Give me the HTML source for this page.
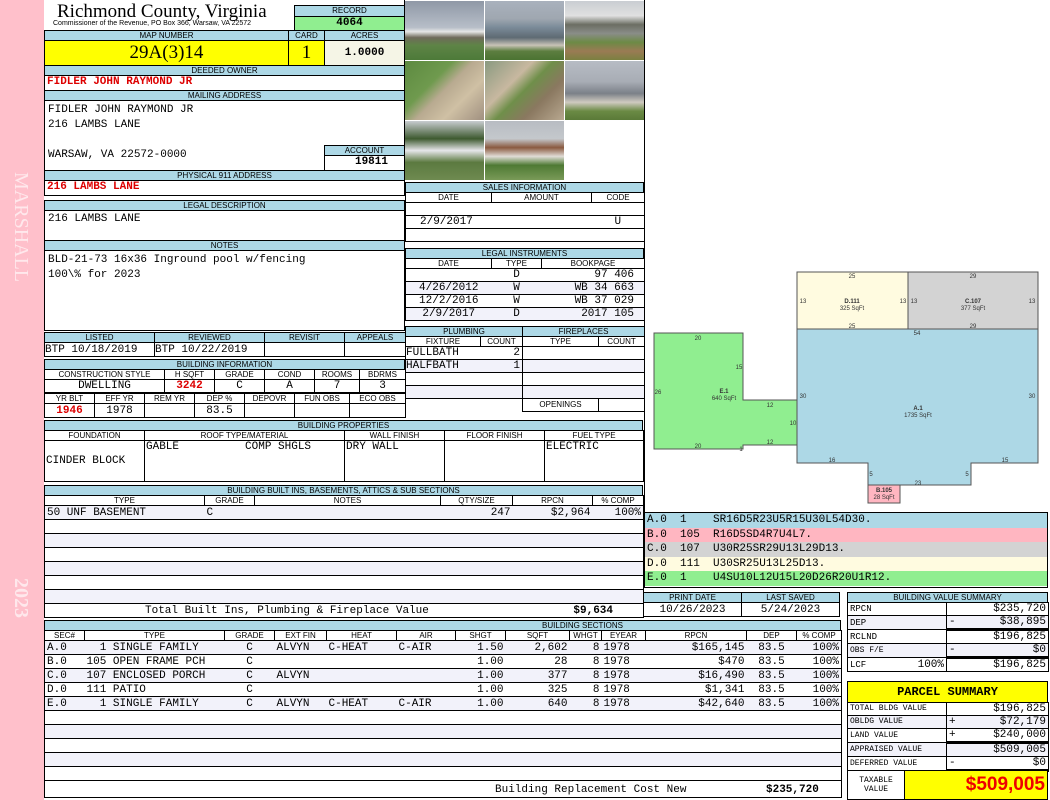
<!DOCTYPE html>
<html><head><meta charset="utf-8"><style>
*{margin:0;padding:0}
body{width:1050px;height:800px;position:relative;background:#fff;overflow:hidden;font-family:"Liberation Sans",sans-serif}
.a{position:absolute;box-sizing:border-box;border:1px solid #000;overflow:hidden}
.h{background:#add8e6;font:8px/8px "Liberation Sans",sans-serif;text-align:center}
.m{font:11px/13px "Liberation Mono",monospace;white-space:pre}
.r{color:#d00;font-weight:bold}
table{position:absolute;border-collapse:collapse;table-layout:fixed}
td{border:1px solid #000;padding:0 2px;overflow:hidden;white-space:pre;font:11px/12px "Liberation Mono",monospace}
td.h{font:8px/8px "Liberation Sans",sans-serif;text-align:center;background:#fff;padding:0}
.c{text-align:center}.rt{text-align:right}
tr.alt td{background:#f2f2fa}
.p{position:absolute;width:79px;height:59px}
.seg div{height:14.6px;padding-left:2px;white-space:pre;font:11px/15px "Liberation Mono",monospace}
</style></head><body>
<!-- left strip -->
<div style="position:absolute;left:0;top:0;width:44px;height:800px;background:#ffc0cb"></div>
<div style="position:absolute;left:32px;top:172px;transform-origin:0 0;transform:rotate(90deg);font:20px 'Liberation Serif',serif;color:#ffe8ec;white-space:nowrap">MARSHALL</div>
<div style="position:absolute;left:32px;top:578px;transform-origin:0 0;transform:rotate(90deg);font:bold 20px 'Liberation Serif',serif;color:#ffe8ec">2023</div>

<!-- header -->
<div style="position:absolute;left:57px;top:1px;font:19px/22px 'Liberation Serif',serif">Richmond County, Virginia</div>
<div style="position:absolute;left:53px;top:19px;font:7px/9px 'Liberation Sans',sans-serif">Commissioner of the Revenue, PO Box 366, Warsaw, VA 22572</div>
<div class="a h" style="left:294px;top:5px;width:111px;height:12px;line-height:10px">RECORD</div>
<div class="a m" style="left:294px;top:16px;width:111px;height:15px;background:#90ee90;text-align:center;font-weight:bold;line-height:13px">4064</div>
<div class="a h" style="left:44px;top:30px;width:245px;height:11px;line-height:9px">MAP NUMBER</div>
<div class="a h" style="left:288px;top:30px;width:37px;height:11px;line-height:9px">CARD</div>
<div class="a h" style="left:324px;top:30px;width:81px;height:11px;line-height:9px">ACRES</div>
<div class="a" style="left:44px;top:40px;width:245px;height:26px;background:#ffff00;font:19px/24px 'Liberation Serif',serif;text-align:center">29A(3)14</div>
<div class="a" style="left:288px;top:40px;width:37px;height:26px;background:#ffff00;font:19px/24px 'Liberation Serif',serif;text-align:center">1</div>
<div class="a m" style="left:324px;top:40px;width:81px;height:26px;background:#f5f5e6;text-align:center;line-height:24px;font-weight:bold">1.0000</div>
<div class="a h" style="left:44px;top:65px;width:361px;height:11px;line-height:9px">DEEDED OWNER</div>
<div class="a m r" style="left:44px;top:75px;width:361px;height:16px;padding-left:2px">FIDLER JOHN RAYMOND JR</div>
<div class="a h" style="left:44px;top:90px;width:361px;height:11px;line-height:9px">MAILING ADDRESS</div>
<div class="a m" style="left:44px;top:100px;width:361px;height:71px;padding:2px 0 0 3px;line-height:15px">FIDLER JOHN RAYMOND JR
216 LAMBS LANE

WARSAW, VA 22572-0000</div>
<div class="a h" style="left:324px;top:145px;width:81px;height:11px;line-height:9px">ACCOUNT</div>
<div class="a m" style="left:324px;top:155px;width:81px;height:16px;text-align:center;font-weight:bold;padding-left:14px">19811</div>
<div class="a h" style="left:44px;top:170px;width:361px;height:11px;line-height:9px">PHYSICAL 911 ADDRESS</div>
<div class="a m r" style="left:44px;top:180px;width:361px;height:16px;padding-left:2px">216 LAMBS LANE</div>
<div class="a h" style="left:44px;top:200px;width:361px;height:11px;line-height:9px">LEGAL DESCRIPTION</div>
<div class="a m" style="left:44px;top:210px;width:361px;height:31px;padding:2px 0 0 3px">216 LAMBS LANE</div>
<div class="a h" style="left:44px;top:240px;width:361px;height:11px;line-height:9px">NOTES</div>
<div class="a m" style="left:44px;top:250px;width:361px;height:81px;padding:2px 0 0 3px;line-height:15px">BLD-21-73 16x36 Inground pool w/fencing
100\% for 2023</div>

<!-- listed -->
<table style="left:44px;top:332px;width:361px">
<colgroup><col style="width:110px"><col style="width:110px"><col style="width:80px"><col style="width:61px"></colgroup>
<tr><td class="h" style="background:#add8e6;height:9px">LISTED</td><td class="h" style="background:#add8e6">REVIEWED</td><td class="h" style="background:#add8e6">REVISIT</td><td class="h" style="background:#add8e6">APPEALS</td></tr>
<tr><td style="height:13px;padding:0">BTP 10/18/2019</td><td style="padding:0">BTP 10/22/2019</td><td></td><td></td></tr>
</table>

<!-- building info -->
<div class="a h" style="left:44px;top:359px;width:361px;height:11px;line-height:9px">BUILDING INFORMATION</div>
<table style="left:44px;top:369px;width:361px">
<colgroup><col style="width:120px"><col style="width:50px"><col style="width:50px"><col style="width:50px"><col style="width:45px"><col style="width:46px"></colgroup>
<tr><td class="h" style="height:9px">CONSTRUCTION STYLE</td><td class="h">H SQFT</td><td class="h">GRADE</td><td class="h">COND</td><td class="h">ROOMS</td><td class="h">BDRMS</td></tr>
<tr><td class="c" style="height:12px">DWELLING</td><td class="c r">3242</td><td class="c">C</td><td class="c">A</td><td class="c">7</td><td class="c">3</td></tr>
</table>
<table style="left:44px;top:393px;width:361px">
<colgroup><col style="width:50px"><col style="width:50px"><col style="width:50px"><col style="width:50px"><col style="width:50px"><col style="width:55px"><col style="width:56px"></colgroup>
<tr><td class="h" style="height:9px">YR BLT</td><td class="h">EFF YR</td><td class="h">REM YR</td><td class="h">DEP %</td><td class="h">DEPOVR</td><td class="h">FUN OBS</td><td class="h">ECO OBS</td></tr>
<tr><td class="c r" style="height:13px">1946</td><td class="c">1978</td><td></td><td class="c">83.5</td><td></td><td></td><td></td></tr>
</table>

<!-- building properties -->
<div class="a h" style="left:44px;top:420px;width:599px;height:11px;line-height:9px">BUILDING PROPERTIES</div>
<table style="left:44px;top:430px;width:599px">
<colgroup><col style="width:100px"><col style="width:200px"><col style="width:100px"><col style="width:100px"><col style="width:99px"></colgroup>
<tr><td class="h" style="height:9px">FOUNDATION</td><td class="h">ROOF TYPE/MATERIAL</td><td class="h">WALL FINISH</td><td class="h">FLOOR FINISH</td><td class="h">FUEL TYPE</td></tr>
<tr><td style="height:40px;vertical-align:middle;padding:0 1px">CINDER BLOCK</td><td style="vertical-align:top;padding:0 1px">GABLE          COMP SHGLS</td><td style="vertical-align:top;padding:0 1px">DRY WALL</td><td></td><td style="vertical-align:top;padding:0 1px">ELECTRIC</td></tr>
</table>

<!-- built ins -->
<div class="a h" style="left:44px;top:485px;width:599px;height:11px;line-height:9px">BUILDING BUILT INS, BASEMENTS, ATTICS &amp; SUB SECTIONS</div>
<table style="left:44px;top:495px;width:599px">
<colgroup><col style="width:160px"><col style="width:50px"><col style="width:186px"><col style="width:72px"><col style="width:80px"><col style="width:51px"></colgroup>
<tr><td class="h" style="height:9px">TYPE</td><td class="h">GRADE</td><td class="h">NOTES</td><td class="h">QTY/SIZE</td><td class="h">RPCN</td><td class="h">% COMP</td></tr>
<tr class="alt"><td style="border-right:0;height:13px">50 UNF BASEMENT</td><td style="border-left:0;border-right:0">C</td><td style="border-left:0;border-right:0"></td><td class="rt" style="border-left:0;border-right:0">247</td><td class="rt" style="border-left:0;border-right:0">$2,964</td><td class="rt" style="border-left:0">100%</td></tr>
<tr><td colspan="6" style="height:13px"></td></tr>
<tr class="alt"><td colspan="6" style="height:13px"></td></tr>
<tr><td colspan="6" style="height:13px"></td></tr>
<tr class="alt"><td colspan="6" style="height:13px"></td></tr>
<tr><td colspan="6" style="height:13px"></td></tr>
<tr class="alt"><td colspan="6" style="height:13px"></td></tr>
<tr><td colspan="4" style="height:13px;padding-left:100px;border-right:0">Total Built Ins, Plumbing &amp; Fireplace Value</td><td class="rt" colspan="2" style="border-left:0;font-weight:bold;padding-right:30px">$9,634</td></tr>
</table>

<!-- building sections -->
<div class="a h" style="left:44px;top:620px;width:797px;height:11px;line-height:9px;padding-left:280px">BUILDING SECTIONS</div>
<table style="left:44px;top:630px;width:797px">
<colgroup><col style="width:40px"><col style="width:140px"><col style="width:50px"><col style="width:52px"><col style="width:70px"><col style="width:59px"><col style="width:50px"><col style="width:64px"><col style="width:32px"><col style="width:44px"><col style="width:101px"><col style="width:50px"><col style="width:45px"></colgroup>
<tr><td class="h" style="height:9px">SEC#</td><td class="h">TYPE</td><td class="h">GRADE</td><td class="h">EXT FIN</td><td class="h">HEAT</td><td class="h">AIR</td><td class="h">SHGT</td><td class="h">SQFT</td><td class="h">WHGT</td><td class="h">EYEAR</td><td class="h">RPCN</td><td class="h">DEP</td><td class="h">% COMP</td></tr>
<tr class="alt"><td style="border-right:0;height:13px">A.0</td><td style="border:0;border-bottom:1px solid #000">  1 SINGLE FAMILY</td><td class="c" style="border:0;border-bottom:1px solid #000">C</td><td style="border:0;border-bottom:1px solid #000">ALVYN</td><td style="border:0;border-bottom:1px solid #000">C-HEAT</td><td style="border:0;border-bottom:1px solid #000">C-AIR</td><td class="rt" style="border:0;border-bottom:1px solid #000">1.50</td><td class="rt" style="border:0;border-bottom:1px solid #000">2,602</td><td class="rt" style="border:0;border-bottom:1px solid #000">8</td><td style="border:0;border-bottom:1px solid #000">1978</td><td class="rt" style="border:0;border-bottom:1px solid #000">$165,145</td><td class="c" style="border:0;border-bottom:1px solid #000">83.5</td><td class="rt" style="border-left:0">100%</td></tr>
<tr><td style="border-right:0;height:13px">B.0</td><td style="border:0;border-bottom:1px solid #000">105 OPEN FRAME PCH</td><td class="c" style="border:0;border-bottom:1px solid #000">C</td><td style="border:0;border-bottom:1px solid #000"></td><td style="border:0;border-bottom:1px solid #000"></td><td style="border:0;border-bottom:1px solid #000"></td><td class="rt" style="border:0;border-bottom:1px solid #000">1.00</td><td class="rt" style="border:0;border-bottom:1px solid #000">28</td><td class="rt" style="border:0;border-bottom:1px solid #000">8</td><td style="border:0;border-bottom:1px solid #000">1978</td><td class="rt" style="border:0;border-bottom:1px solid #000">$470</td><td class="c" style="border:0;border-bottom:1px solid #000">83.5</td><td class="rt" style="border-left:0">100%</td></tr>
<tr class="alt"><td style="border-right:0;height:13px">C.0</td><td style="border:0;border-bottom:1px solid #000">107 ENCLOSED PORCH</td><td class="c" style="border:0;border-bottom:1px solid #000">C</td><td style="border:0;border-bottom:1px solid #000">ALVYN</td><td style="border:0;border-bottom:1px solid #000"></td><td style="border:0;border-bottom:1px solid #000"></td><td class="rt" style="border:0;border-bottom:1px solid #000">1.00</td><td class="rt" style="border:0;border-bottom:1px solid #000">377</td><td class="rt" style="border:0;border-bottom:1px solid #000">8</td><td style="border:0;border-bottom:1px solid #000">1978</td><td class="rt" style="border:0;border-bottom:1px solid #000">$16,490</td><td class="c" style="border:0;border-bottom:1px solid #000">83.5</td><td class="rt" style="border-left:0">100%</td></tr>
<tr><td style="border-right:0;height:13px">D.0</td><td style="border:0;border-bottom:1px solid #000">111 PATIO</td><td class="c" style="border:0;border-bottom:1px solid #000">C</td><td style="border:0;border-bottom:1px solid #000"></td><td style="border:0;border-bottom:1px solid #000"></td><td style="border:0;border-bottom:1px solid #000"></td><td class="rt" style="border:0;border-bottom:1px solid #000">1.00</td><td class="rt" style="border:0;border-bottom:1px solid #000">325</td><td class="rt" style="border:0;border-bottom:1px solid #000">8</td><td style="border:0;border-bottom:1px solid #000">1978</td><td class="rt" style="border:0;border-bottom:1px solid #000">$1,341</td><td class="c" style="border:0;border-bottom:1px solid #000">83.5</td><td class="rt" style="border-left:0">100%</td></tr>
<tr class="alt"><td style="border-right:0;height:13px">E.0</td><td style="border:0;border-bottom:1px solid #000">  1 SINGLE FAMILY</td><td class="c" style="border:0;border-bottom:1px solid #000">C</td><td style="border:0;border-bottom:1px solid #000">ALVYN</td><td style="border:0;border-bottom:1px solid #000">C-HEAT</td><td style="border:0;border-bottom:1px solid #000">C-AIR</td><td class="rt" style="border:0;border-bottom:1px solid #000">1.00</td><td class="rt" style="border:0;border-bottom:1px solid #000">640</td><td class="rt" style="border:0;border-bottom:1px solid #000">8</td><td style="border:0;border-bottom:1px solid #000">1978</td><td class="rt" style="border:0;border-bottom:1px solid #000">$42,640</td><td class="c" style="border:0;border-bottom:1px solid #000">83.5</td><td class="rt" style="border-left:0">100%</td></tr>
<tr><td colspan="13" style="height:13px"></td></tr>
<tr class="alt"><td colspan="13" style="height:13px"></td></tr>
<tr><td colspan="13" style="height:13px"></td></tr>
<tr class="alt"><td colspan="13" style="height:13px"></td></tr>
<tr><td colspan="13" style="height:13px"></td></tr>
<tr><td colspan="13" style="height:16px"></td></tr>
</table>
<div class="m" style="position:absolute;left:495px;top:784px">Building Replacement Cost New</div>
<div class="m" style="position:absolute;left:766px;top:784px;font-weight:bold">$235,720</div>

<!-- photos -->
<div class="p" style="left:405px;top:1px;background:linear-gradient(#8f98a6 0,#b7bec8 45%,#e6e6e6 52%,#6f6a5a 62%,#5e8446 75%,#4d7a39 100%)"></div>
<div class="p" style="left:485px;top:1px;background:linear-gradient(#a9b1bd 0,#9fa7b0 30%,#7a8a98 45%,#5e6a73 62%,#c8c3b6 75%,#5d7e40 85%,#4b7332 100%)"></div>
<div class="p" style="left:565px;top:1px;background:linear-gradient(#c9cdd2 0,#e0e0e0 25%,#6b6e63 40%,#8a8d88 55%,#6c8a45 70%,#9a7b54 85%,#7a8040 100%)"></div>
<div class="p" style="left:405px;top:61px;background:linear-gradient(135deg,#5d8a40 0,#6f9a4e 35%,#b8aa90 50%,#cfc0a4 70%,#a09080 100%)"></div>
<div class="p" style="left:485px;top:61px;background:linear-gradient(135deg,#8a9a80 0,#c8b8a0 35%,#6f8f4a 50%,#8a7860 70%,#b8a890 100%)"></div>
<div class="p" style="left:565px;top:61px;background:linear-gradient(#b7bcc4 0,#a8adb5 35%,#7b8088 55%,#cfcac0 70%,#6b8a44 85%,#5a7a38 100%)"></div>
<div class="p" style="left:405px;top:121px;background:linear-gradient(#c8ccd0 0,#3e5a30 30%,#e6e6ea 50%,#5c7a40 70%,#6e8a50 100%)"></div>
<div class="p" style="left:485px;top:121px;background:linear-gradient(#b8bcc2 0,#c4c8cc 30%,#8a5a40 45%,#e0dcd6 60%,#4e7a34 75%,#7a9a58 100%)"></div>
<div style="position:absolute;left:404px;top:0;width:1px;height:182px;background:#000"></div>
<div style="position:absolute;left:644px;top:0;width:1px;height:512px;background:#000"></div>

<!-- sales -->
<div class="a h" style="left:405px;top:182px;width:239px;height:11px;line-height:9px">SALES INFORMATION</div>
<table style="left:405px;top:192px;width:239px">
<colgroup><col style="width:86px"><col style="width:100px"><col style="width:53px"></colgroup>
<tr><td class="h" style="height:9px">DATE</td><td class="h">AMOUNT</td><td class="h">CODE</td></tr>
<tr><td colspan="3" style="height:12px"></td></tr>
<tr><td colspan="2" style="height:12px;border-right:0;padding-left:14px">2/9/2017</td><td class="c" style="border-left:0">U</td></tr>
<tr><td colspan="3" style="height:12px"></td></tr>
</table>
<div class="a h" style="left:405px;top:248px;width:239px;height:11px;line-height:9px">LEGAL INSTRUMENTS</div>
<table style="left:405px;top:258px;width:239px">
<colgroup><col style="width:86px"><col style="width:50px"><col style="width:103px"></colgroup>
<tr><td class="h" style="height:9px">DATE</td><td class="h">TYPE</td><td class="h">BOOKPAGE</td></tr>
<tr><td style="height:12px;border-right:0"></td><td class="c" style="border:0;border-bottom:1px solid #000">D</td><td class="rt" style="border-left:0;padding-right:10px">97 406</td></tr>
<tr class="alt"><td class="c" style="height:12px;border-right:0">4/26/2012</td><td class="c" style="border:0;border-bottom:1px solid #000">W</td><td class="rt" style="border-left:0;padding-right:10px">WB 34 663</td></tr>
<tr><td class="c" style="height:12px;border-right:0">12/2/2016</td><td class="c" style="border:0;border-bottom:1px solid #000">W</td><td class="rt" style="border-left:0;padding-right:10px">WB 37 029</td></tr>
<tr class="alt"><td class="c" style="height:12px;border-right:0">2/9/2017</td><td class="c" style="border:0;border-bottom:1px solid #000">D</td><td class="rt" style="border-left:0;padding-right:10px">2017 105</td></tr>
</table>
<table style="left:405px;top:326px;width:239px">
<colgroup><col style="width:75px"><col style="width:42px"><col style="width:76px"><col style="width:46px"></colgroup>
<tr><td class="h" colspan="2" style="height:9px;background:#add8e6">PLUMBING</td><td class="h" colspan="2" style="background:#add8e6">FIREPLACES</td></tr>
<tr><td class="h" style="height:9px">FIXTURE</td><td class="h">COUNT</td><td class="h">TYPE</td><td class="h">COUNT</td></tr>
<tr><td style="height:12px;border-right:0;padding:0">FULLBATH</td><td class="rt" style="border-left:0">2</td><td colspan="2"></td></tr>
<tr class="alt"><td style="height:12px;border-right:0;padding:0">HALFBATH</td><td class="rt" style="border-left:0">1</td><td colspan="2"></td></tr>
<tr><td colspan="2" style="height:12px"></td><td colspan="2"></td></tr>
<tr class="alt"><td colspan="2" style="height:12px"></td><td colspan="2"></td></tr>
<tr><td colspan="2" style="height:12px;border-bottom:0"></td><td class="h" style="background:#fff">OPENINGS</td><td></td></tr>
</table>

<!-- sketch -->
<svg style="position:absolute;left:645px;top:260px" width="403" height="250" font-family="Liberation Sans" font-size="6">
<g stroke="#555" stroke-width="1">
<rect x="152" y="12" width="111" height="57" fill="#fffbe0"/>
<rect x="263" y="12" width="130" height="57" fill="#d3d3d3"/>
<path d="M152 69H393V203H326V225H223V203H152Z" fill="#add8e6"/>
<rect x="223" y="225" width="32" height="18" fill="#ffb6c1"/>
<path d="M9 73H98V140H152V185H98V189H9Z" fill="#90ee90"/>
</g>
<g fill="#333" text-anchor="middle">
<text x="207" y="18">25</text><text x="207" y="68">25</text><text x="158" y="43">13</text><text x="258" y="43">13</text>
<text x="207" y="43" font-weight="bold">D.111</text><text x="207" y="50">325 SqFt</text>
<text x="328" y="18">29</text><text x="328" y="68">29</text><text x="269" y="43">13</text><text x="387" y="43">13</text>
<text x="328" y="43" font-weight="bold">C.107</text><text x="328" y="50">377 SqFt</text>
<text x="272" y="75">54</text><text x="158" y="138">30</text><text x="387" y="138">30</text>
<text x="273" y="150" font-weight="bold">A.1</text><text x="273" y="157">1735 SqFt</text>
<text x="187" y="202">16</text><text x="360" y="202">15</text><text x="273" y="225">23</text><text x="226" y="216">5</text><text x="322" y="216">5</text>
<text x="239" y="232" font-weight="bold">B.105</text><text x="239" y="239">28 SqFt</text>
<text x="53" y="80">20</text><text x="53" y="188">20</text><text x="13" y="134">26</text><text x="94" y="109">15</text>
<text x="79" y="133" font-weight="bold">E.1</text><text x="79" y="140">640 SqFt</text>
<text x="125" y="147">12</text><text x="125" y="184">12</text><text x="148" y="165">10</text><text x="96" y="191">1</text>
</g>
</svg>

<!-- segments -->
<div class="a seg" style="left:644px;top:512px;width:404px;height:76px"><div style="background:#add8e6">A.0  1    SR16D5R23U5R15U30L54D30.</div><div style="background:#ffb6c1">B.0  105  R16D5SD4R7U4L7.</div><div style="background:#d3d3d3">C.0  107  U30R25SR29U13L29D13.</div><div style="background:#fffbe0">D.0  111  U30SR25U13L25D13.</div><div style="background:#90ee90">E.0  1    U4SU10L12U15L20D26R20U1R12.</div></div>

<table style="left:643px;top:592px;width:196px">
<colgroup><col style="width:98px"><col style="width:98px"></colgroup>
<tr><td class="h" style="height:9px;background:#add8e6">PRINT DATE</td><td class="h" style="background:#add8e6">LAST SAVED</td></tr>
<tr><td class="c" style="height:13px">10/26/2023</td><td class="c">5/24/2023</td></tr>
</table>

<!-- value summary -->
<div class="a h" style="left:847px;top:592px;width:201px;height:11px;line-height:9px">BUILDING VALUE SUMMARY</div>
<table style="left:847px;top:602px;width:201px">
<colgroup><col style="width:99px"><col style="width:102px"></colgroup>
<tr><td style="height:12px;font-size:9px">RPCN</td><td class="rt">$235,720</td></tr>
<tr class="alt"><td style="height:12px;font-size:9px">DEP</td><td class="rt" style="border-bottom:3px solid #000"><span style="float:left">-</span>$38,895</td></tr>
<tr><td style="height:12px;font-size:9px">RCLND</td><td class="rt">$196,825</td></tr>
<tr class="alt"><td style="height:12px;font-size:8px">OBS F/E</td><td class="rt" style="border-bottom:3px solid #000"><span style="float:left">-</span>$0</td></tr>
<tr><td style="height:12px;font-size:9px">LCF<span style="float:right;font-size:11px">100%</span></td><td class="rt">$196,825</td></tr>
</table>
<div class="a" style="left:847px;top:681px;width:201px;height:22px;background:#ffff00;font:bold 12px/20px 'Liberation Mono',monospace;text-align:center">PARCEL SUMMARY</div>
<table style="left:847px;top:702px;width:201px">
<colgroup><col style="width:99px"><col style="width:102px"></colgroup>
<tr><td style="height:12px;font-size:8px">TOTAL BLDG VALUE</td><td class="rt">$196,825</td></tr>
<tr class="alt"><td style="height:12px;font-size:8px">OBLDG VALUE</td><td class="rt"><span style="float:left">+</span>$72,179</td></tr>
<tr><td style="height:12px;font-size:8px">LAND VALUE</td><td class="rt" style="border-bottom:3px solid #000"><span style="float:left">+</span>$240,000</td></tr>
<tr class="alt"><td style="height:12px;font-size:8px">APPRAISED VALUE</td><td class="rt">$509,005</td></tr>
<tr><td style="height:12px;font-size:8px">DEFERRED VALUE</td><td class="rt" style="border-bottom:3px solid #000"><span style="float:left">-</span>$0</td></tr>
</table>
<div class="a" style="left:847px;top:770px;width:58px;height:30px;font:8px/9px 'Liberation Mono',monospace;text-align:center;padding-top:5px">TAXABLE<br>VALUE</div>
<div class="a" style="left:904px;top:770px;width:144px;height:30px;background:#ffff00;font:bold 19px/28px 'Liberation Sans',sans-serif;color:#e00;text-align:right;padding-right:2px">$509,005</div>
</body></html>
